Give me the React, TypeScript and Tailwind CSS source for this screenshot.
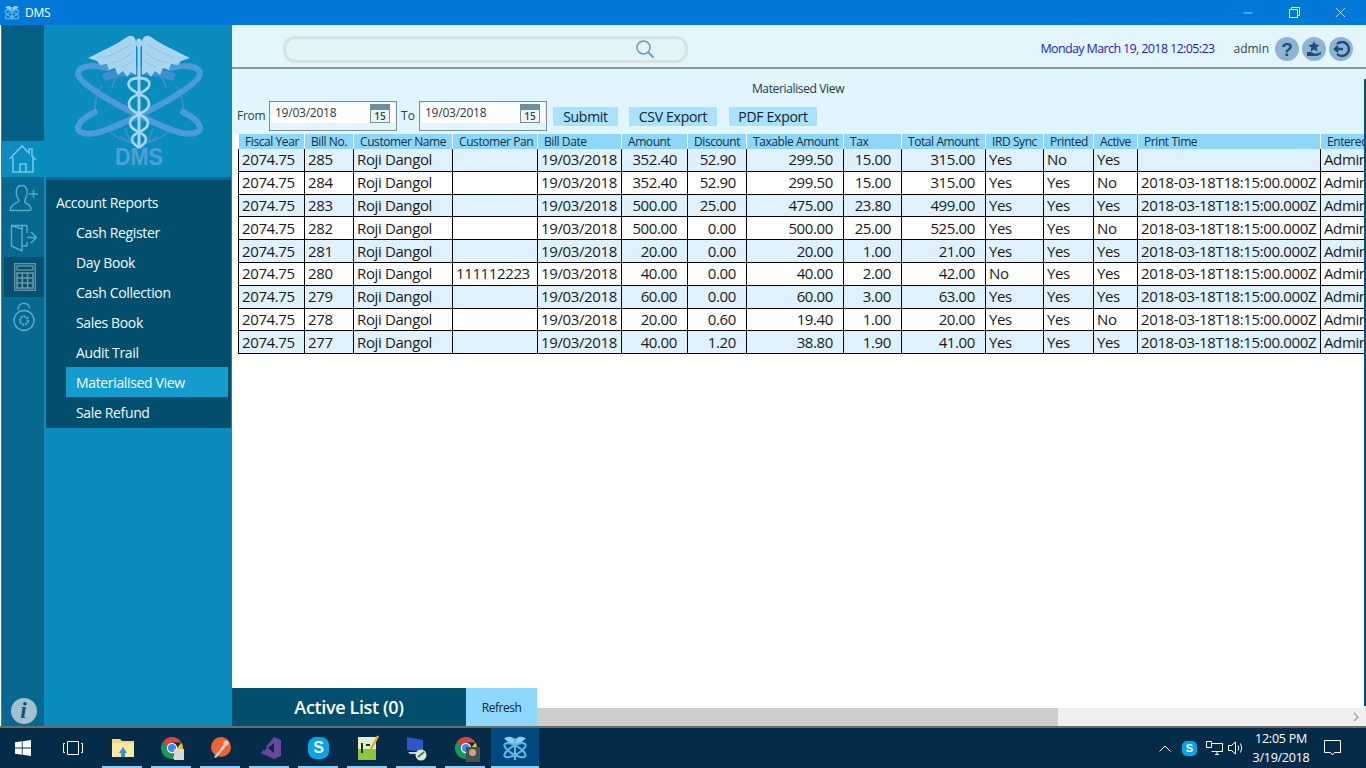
import { Minus, X } from "lucide-react";

const COLS = "66px 49px 99px 85px 84px 66px 59px 97px 58px 84px 58px 50px 44px 183px 60px";

const HEADERS = [
    "Fiscal Year", "Bill No.", "Customer Name", "Customer Pan", "Bill Date", "Amount", "Discount",
    "Taxable Amount", "Tax", "Total Amount", "IRD Sync", "Printed", "Active", "Print Time", "Entered By",
];

const TIME = "2018-03-18T18:15:00.000Z";

const ROWS = [
    ["285", "", "352.40", "52.90", "299.50", "15.00", "315.00", "Yes", "No", "Yes", ""],
    ["284", "", "352.40", "52.90", "299.50", "15.00", "315.00", "Yes", "Yes", "No", TIME],
    ["283", "", "500.00", "25.00", "475.00", "23.80", "499.00", "Yes", "Yes", "Yes", TIME],
    ["282", "", "500.00", "0.00", "500.00", "25.00", "525.00", "Yes", "Yes", "No", TIME],
    ["281", "", "20.00", "0.00", "20.00", "1.00", "21.00", "Yes", "Yes", "Yes", TIME],
    ["280", "111112223", "40.00", "0.00", "40.00", "2.00", "42.00", "No", "Yes", "Yes", TIME],
    ["279", "", "60.00", "0.00", "60.00", "3.00", "63.00", "Yes", "Yes", "Yes", TIME],
    ["278", "", "20.00", "0.60", "19.40", "1.00", "20.00", "Yes", "Yes", "No", TIME],
    ["277", "", "40.00", "1.20", "38.80", "1.90", "41.00", "Yes", "Yes", "Yes", TIME],
];

const MENU = ["Cash Register", "Day Book", "Cash Collection", "Sales Book", "Audit Trail", "Materialised View", "Sale Refund"];

function Wing() {
    return (
        <g>
            <path
                d="M66 45 L61 42 L57 47 L53 41 L48 45 L45 38 L39 40 L37 34 L30 35 L27 31 L18 28 C30 22 47 14 57 7 C62 4 66 7 66 13 Z"
                fill="#a6d5f0"
            />
            <path d="M61 14 C52 20 42 25 33 28 M63 22 C56 28 48 32 41 33 M64 30 C60 34 56 36 51 37" stroke="#8cc6e8" strokeWidth="1" fill="none" />
        </g>
    );
}

function Logo() {
    return (
        <svg width="136" height="140" viewBox="0 0 136 140" fill="none">
            {/* globo */}
            <path d="M32 44 Q69 30 106 44 L103 51 Q69 39 35 51 Z" fill="#3f8fca" />
            <g stroke="#3f8fca" strokeWidth="1.6">
                <path d="M32 56 Q24 68 25 82 M106 56 Q114 68 113 82" />
                <path d="M49 44 Q44 50 42 58 M89 44 Q94 50 96 58" />
                <path d="M38 100 Q69 128 100 100 M50 106 Q69 122 88 106" />
                <path d="M55 98 L60 112 M83 98 L78 112" />
            </g>
            {/* faixas cruzadas */}
            <g stroke="#4a9bd8" strokeWidth="6" strokeLinecap="round">
                <path d="M38 38 C22 34 8 36 8 44 C9 52 34 68 58 80 C78 90 98 100 112 103 C124 105 131 102 130 97 C129 92 121 86 113 82" />
                <path d="M100 38 C116 34 130 36 130 44 C129 52 104 68 80 80 C60 90 40 100 26 103 C14 105 7 102 8 97 C9 92 17 86 25 82" />
            </g>
            {/* asas */}
            <Wing />
            <g transform="translate(138 0) scale(-1 1)"><Wing /></g>
            {/* bastão e serpentes */}
            <path d="M69 12 V118" stroke="#a6d5f0" strokeWidth="3" />
            <ellipse cx="69" cy="13" rx="3" ry="4.5" fill="#a6d5f0" />
            <g stroke="#a6d5f0" strokeWidth="2.6">
                <path d="M78 50 C70 46 56 48 59 56 C62 64 79 64 79 74 C79 84 60 84 60 93 C60 102 76 102 76 109 C76 114 71 116 69 118" />
                <path d="M60 50 C68 46 82 48 79 56 C76 64 59 64 59 74 C59 84 78 84 78 93 C78 102 62 102 62 109 C62 114 67 116 69 118" />
            </g>
            <text x="45" y="135" textLength="48" lengthAdjust="spacingAndGlyphs" fill="#4f9fd8" fontFamily="Liberation Sans" fontWeight="700" fontSize="24">DMS</text>
        </svg>
    );
}

function HomeIcon() {
    return (
        <svg width="30" height="30" viewBox="0 0 30 30" fill="none" stroke="#6fc6e4" strokeWidth="1.6">
            <path d="M1.5 15 L14 2 L21 9 V5 H24 V12 L28 16 M5 13 V28 H25 V12 M12 28 V20 H18 V28" />
        </svg>
    );
}

function RailIcon({ name }: { name: "user" | "door" | "calc" | "lock" }) {
    if (name === "user") {
        return (
            <svg width="30" height="28" viewBox="0 0 30 28" fill="none" stroke="#5fa9c8" strokeWidth="1.4">
                <path d="M13 1.5 C8 1.5 6.5 6 7.5 11 C8 13.5 10 15 10 17 C9 19 2 20 1.5 25 V26.5 H21 C23 26 22 21 16 18.5 C15 17 17 14 18 11 C19 6 17 1.5 13 1.5 Z M20 10 H29 M24.5 6 V14" />
            </svg>
        );
    }
    if (name === "door") {
        return (
            <svg width="28" height="28" viewBox="0 0 28 28" fill="none" stroke="#5fa9c8" strokeWidth="1.4">
                <path d="M12 5 V1.5 H1.5 V22 L12 27 V5 L1.5 1.5 M12 22 H17 V18 M17 9 V1.5 H12 M17 13.5 H25 M21 8 L26.5 13.5 L21 19" />
            </svg>
        );
    }
    if (name === "calc") {
        return (
            <svg width="22" height="28" viewBox="0 0 22 28" fill="none" stroke="#6f97a8" strokeWidth="1.3">
                <rect x="0.7" y="0.7" width="20.6" height="26.6" />
                <rect x="3" y="3" width="16" height="4" />
                <path d="M3 10 H19 V25 H3 Z M8.3 10 V25 M13.6 10 V25 M3 15 H19 M3 20 H19" strokeWidth="1.6" />
            </svg>
        );
    }
    return (
        <svg width="22" height="30" viewBox="0 0 22 30" fill="none" stroke="#5fa9c8" strokeWidth="1.4">
            <path d="M5 8 C5 -0.5 16 -0.5 16.5 6" />
            <circle cx="11" cy="18.5" r="10" />
            <circle cx="11" cy="18.5" r="4" strokeDasharray="2 1" strokeWidth="2.4" />
        </svg>
    );
}

function CalendarIcon() {
    return (
        <div className="w-[20px] h-[19px] border border-[#7d8b94] bg-[#eef3f6] flex flex-col shrink-0">
            <div className="h-[5px] bg-[#6e8ea4]" />
            <div className="flex-1 flex items-center justify-center text-[10px] leading-none text-[#2c4a5c] font-semibold">15</div>
        </div>
    );
}

function DateBox() {
    return (
        <div className="w-[128px] h-[30px] border border-[#7f8c94] p-px">
            <div className="h-[20px] bg-white flex items-center justify-between pl-[4px] pr-[5px]">
                <span className="text-[12px] text-[#2a3a44] tracking-[-0.02em]">19/03/2018</span>
                <CalendarIcon />
            </div>
        </div>
    );
}

function ActionBtn({ label, width }: { label: string; width: string }) {
    return (
        <div className={`${width} h-[19px] bg-[#a9e2fc] flex items-center justify-center text-[14px] leading-none text-[#10242e] tracking-[-0.02em] mt-[6px] pt-[1px]`}>
            {label}
        </div>
    );
}

function Round({ children }: { children: React.ReactNode }) {
    return (
        <div className="w-[24px] h-[24px] rounded-full bg-[#8db4d2] flex items-center justify-center">
            {children}
        </div>
    );
}

function Row({ row, idx }: { row: string[]; idx: number }) {
    const [bill, pan, amount, discount, taxable, tax, total, ird, printed, active, time] = row;
    const cell = "border-r border-black px-[3px] flex items-center overflow-hidden whitespace-nowrap";
    const right = `${cell} justify-end pr-[10px]`;
    return (
        <div
            className={`grid h-[22.8px] border-b border-black text-[15px] leading-none text-[#1a1a1a] tracking-[-0.025em] ${idx % 2 === 0 ? "bg-[#e0f1fe]" : "bg-white"}`}
            style={{ gridTemplateColumns: COLS }}
        >
            <div className={cell}>2074.75</div>
            <div className={cell}>{bill}</div>
            <div className={cell}>Roji Dangol</div>
            <div className={cell}>{pan}</div>
            <div className={cell}>19/03/2018</div>
            <div className={right}>{amount}</div>
            <div className={right}>{discount}</div>
            <div className={right}>{taxable}</div>
            <div className={right}>{tax}</div>
            <div className={right}>{total}</div>
            <div className={cell}>{ird}</div>
            <div className={cell}>{printed}</div>
            <div className={cell}>{active}</div>
            <div className={cell}>{time}</div>
            <div className="px-[3px] flex items-center whitespace-nowrap">Admin</div>
        </div>
    );
}

function TaskIcon({ children, active, line = true }: { children: React.ReactNode; active?: boolean; line?: boolean }) {
    return (
        <div className={`relative h-[40px] flex items-center justify-center ${active ? "w-[48px] bg-[#004a80] ml-[1px]" : "w-[49px]"}`}>
            {children}
            {line && <div className={`absolute bottom-0 h-[2px] bg-[#8ccbf0] ${active ? "inset-x-0" : "left-[4px] right-[5px]"}`} />}
        </div>
    );
}

function ChromeIcon() {
    return (
        <svg width="22" height="22" viewBox="0 0 22 22">
            <path d="M11 0 A11 11 0 0 1 20.5 5.5 L11 5.5 Z M11 0 A11 11 0 0 0 2 4.7 L6 11 L11 5.5 Z" fill="#dc4437" />
            <path d="M20.5 5.5 A11 11 0 0 1 11 22 L16 11 Z" fill="#f4c20d" />
            <path d="M2 4.7 A11 11 0 0 0 11 22 L16 13 L6 11 Z" fill="#0f9d58" />
            <circle cx="11" cy="11" r="5.2" fill="#fff" />
            <circle cx="11" cy="11" r="4" fill="#4285f4" />
        </svg>
    );
}

function DmsGlyph({ size }: { size: number }) {
    return (
        <svg width={size} height={size} viewBox="0 0 24 24" fill="none">
            <path d="M11 9 C7 8 4 5 2 3 C6 1 10 1 11 4 Z M13 9 C17 8 20 5 22 3 C18 1 14 1 13 4 Z" fill="#8fd0ee" />
            <path d="M12 3 V23" stroke="#8fd0ee" strokeWidth="1.5" />
            <ellipse cx="12" cy="14" rx="11" ry="4" transform="rotate(30 12 14)" stroke="#5fb4e2" strokeWidth="2" />
            <ellipse cx="12" cy="14" rx="11" ry="4" transform="rotate(-30 12 14)" stroke="#5fb4e2" strokeWidth="2" />
        </svg>
    );
}

export default function App() {
    return (
        <div className="relative w-[1366px] h-[768px] overflow-hidden flex flex-col bg-white text-[#10242e] font-['Open_Sans',sans-serif]">

            {/* Barra de título */}
            <div className="h-[25px] bg-[#0078d7] flex items-center shrink-0 text-white">
                <div className="ml-[4px] mr-[5px]"><DmsGlyph size={16} /></div>
                <span className="text-[12px] tracking-[-0.02em]">DMS</span>
                <div className="ml-auto flex items-center mr-[2px]">
                    <div className="w-[46px] flex justify-center"><Minus size={14} strokeWidth={1} /></div>
                    <div className="w-[46px] flex justify-center">
                        <svg width="11" height="11" viewBox="0 0 11 11" fill="none" stroke="white">
                            <path d="M0.5 2.5 H8.5 V10.5 H0.5 Z M2.5 2.5 V0.5 H10.5 V8.5 H8.5" />
                        </svg>
                    </div>
                    <div className="w-[46px] mr-[1px] flex justify-center"><X size={17} strokeWidth={1} /></div>
                </div>
            </div>

            <div className="flex-1 flex min-h-0">

                {/* Trilho de ícones */}
                <div className="w-[44px] ml-[1px] -mr-[1px] shrink-0 flex flex-col bg-[#07698f] border-l border-[#2a7fb0]">
                    <div className="h-[116px] bg-[#035f83]" />
                    <div className="h-[36px] bg-[#0a8cbd] flex items-center justify-center pr-[2px]"><HomeIcon /></div>
                    <div className="h-[40px] flex items-center justify-center mt-[1px]"><RailIcon name="user" /></div>
                    <div className="h-[39px] flex items-center justify-center"><RailIcon name="door" /></div>
                    <div className="h-[40px] ml-[2px] bg-[#045070] flex items-center justify-center"><RailIcon name="calc" /></div>
                    <div className="h-[40px] flex items-center justify-center"><RailIcon name="lock" /></div>
                    <div className="mt-auto mb-[2px] flex justify-center">
                        <div className="w-[26px] h-[26px] rounded-full bg-[#a3bfd0] flex items-center justify-center font-['Liberation_Serif',serif] italic font-bold text-[23px] text-[#0e5675]">i</div>
                    </div>
                </div>

                {/* Menu lateral */}
                <div className="w-[188px] shrink-0 flex flex-col bg-[#0a8cbd]">
                    <div className="h-[152px] pl-[26px] pt-[5px]"><Logo /></div>
                    <div className="h-[251px] ml-[2px] mr-px bg-[#024f6d] border-t-[3px] border-[#05688e] text-[#f2fbff] text-[14px] tracking-[-0.025em] font-medium">
                        <div className="h-[37px] pl-[10px] flex items-center pt-[8px]">Account Reports</div>
                        {MENU.map(m => (
                            <div
                                key={m}
                                className={`h-[30px] ml-[20px] mr-[3px] pl-[10px] flex items-center ${m === "Materialised View" ? "bg-[#159ccf]" : ""}`}
                            >
                                {m}
                            </div>
                        ))}
                    </div>
                </div>

                {/* Conteúdo */}
                <div className="flex-1 min-w-0 flex flex-col">
                    <div className="h-[44px] shrink-0 bg-[#e4f6fd] border-b-2 border-[#8e9a9e] flex items-center pt-[6px]">
                        <div className="ml-[51px] w-[405px] h-[27px] rounded-[12px] border-[3px] border-[#d6e3e6] bg-[#e3f3f7] flex items-center justify-end pr-[30px]">
                            <svg width="20" height="20" viewBox="0 0 20 20" fill="none">
                                <circle cx="8.5" cy="8.5" r="6.5" stroke="#5f9fd0" strokeWidth="1.5" />
                                <path d="M13.5 13.5 L18.5 18.5" stroke="#5f9fd0" strokeWidth="2" />
                            </svg>
                        </div>
                        <span className="ml-auto text-[12.5px] text-[#1c1cd0] tracking-[-0.05em] font-medium">Monday March 19, 2018 12:05:23</span>
                        <span className="ml-[19px] text-[12px] text-[#1f4a60]">admin</span>
                        <div className="ml-[6px] mr-[13px] flex items-center gap-[3px]">
                            <Round><span className="font-['Liberation_Sans',sans-serif] font-bold text-[19px] leading-none text-[#1c4f78]">?</span></Round>
                            <Round>
                                <svg width="16" height="16" viewBox="0 0 16 16" fill="#1c4f78">
                                    <path d="M8 0 L9.7 3.6 L13.5 4 L10.7 6.6 L11.4 10.4 L8 8.5 L4.6 10.4 L5.3 6.6 L2.5 4 L6.3 3.6 Z M1 11 H5 L8 12.5 H11 L15 11 V13 L11 15 H1 Z" />
                                </svg>
                            </Round>
                            <Round>
                                <svg width="18" height="18" viewBox="0 0 18 18" fill="none" stroke="#1c4f78" strokeWidth="2.4">
                                    <path d="M5 4 A7 7 0 1 1 5 14 M2 9 H11 M6 6 L3 9 L6 12" />
                                </svg>
                            </Round>
                        </div>
                    </div>

                    <div className="h-[65px] shrink-0 bg-[#e1f5fe] flex flex-col">
                        <div className="h-[32px] text-center text-[12px] tracking-[-0.03em] text-[#1f3a4a] pt-[11px] leading-[18px] pr-[2px]">Materialised View</div>
                        <div className="h-[33px] flex items-start ml-[5px]">
                            <span className="w-[32px] text-[12px] text-[#2a4452] mt-[6px] tracking-[-0.02em]">From</span>
                            <DateBox />
                            <span className="w-[22px] text-center text-[12px] text-[#2a4452] mt-[6px]">To</span>
                            <DateBox />
                            <div className="ml-[6px] flex gap-[11px]">
                                <ActionBtn label="Submit" width="w-[65px]" />
                                <ActionBtn label="CSV Export" width="w-[88px]" />
                                <ActionBtn label="PDF Export" width="w-[88px] ml-px" />
                            </div>
                        </div>
                    </div>

                    <div className="ml-[6px] w-[1126px] overflow-hidden">
                        <div
                            className="grid ml-px w-[1142px] h-[15px] text-[12px] leading-none text-[#15303e] tracking-[-0.035em]"
                            style={{ gridTemplateColumns: COLS }}
                        >
                            {HEADERS.map(h => (
                                <div key={h} className="bg-[#8fd6fb] mr-px pl-[6px] flex items-center overflow-hidden whitespace-nowrap">{h}</div>
                            ))}
                        </div>
                        <div className="w-[1143px] border-l border-black">
                            {ROWS.map((r, i) => <Row key={r[0]} row={r} idx={i} />)}
                        </div>
                    </div>

                    <div className="flex-1" />

                    <div className="h-[38px] shrink-0 flex items-stretch">
                        <div className="w-[234px] bg-[#024f6d] flex items-center justify-center text-[18px] font-semibold text-white tracking-[-0.02em]">Active List (0)</div>
                        <div className="w-[71px] bg-[#8fd8fd] flex items-center justify-center pt-px text-[12px] tracking-[-0.04em] text-[#10242e]">Refresh</div>
                        <div className="flex-1 self-end h-[18px] bg-[#f0f0f0] flex items-center">
                            <div className="w-[521px] h-full bg-[#cdcdcd]" />
                            <svg className="ml-auto mr-[7px]" width="6" height="10" viewBox="0 0 6 10" fill="none" stroke="#a0a0a0" strokeWidth="1.3">
                                <path d="M1 1 L5 5 L1 9" />
                            </svg>
                        </div>
                    </div>
                </div>
            </div>

            {/* Barra de tarefas */}
            <div className="h-[42px] shrink-0 bg-[#042b48] border-t-[2px] border-[#6e6a68] flex items-center text-white">
                <div className="w-[48px] flex justify-center pr-[2px]">
                    <svg width="16" height="16" viewBox="0 0 16 16" fill="white">
                        <path d="M0 2.3 L6.8 1.3 V7.5 H0 Z M7.6 1.2 L16 0 V7.5 H7.6 Z M0 8.4 H6.8 V14.7 L0 13.7 Z M7.6 8.4 H16 V16 L7.6 14.8 Z" />
                    </svg>
                </div>
                <div className="w-[49px] flex justify-center">
                    <svg width="20" height="14" viewBox="0 0 20 14" fill="none" stroke="white" strokeWidth="1">
                        <path d="M4.5 0.5 H15.5 V13.5 H4.5 Z M2 2.5 H0.5 V11.5 H2 M18 2.5 H19.5 V11.5 H18" />
                    </svg>
                </div>
                <div className="flex items-center ml-[1px]">
                    <TaskIcon>
                        <svg width="22" height="20" viewBox="0 0 22 20">
                            <path d="M0 1 H8 L10 3 H22 V19 H0 Z" fill="#f6d77c" />
                            <path d="M0 5 H22 V19 H0 Z" fill="#ffe9a1" />
                            <path d="M7 15 L11 9 L15 15 H13 V19 H9 V15 Z" fill="#2f93d6" />
                        </svg>
                    </TaskIcon>
                    <TaskIcon>
                        <div className="relative">
                            <ChromeIcon />
                            <div className="absolute -right-[1px] -bottom-[1px] w-[10px] h-[11px] bg-[#d8d8d8]" />
                        </div>
                    </TaskIcon>
                    <TaskIcon>
                        <svg width="22" height="24" viewBox="0 0 22 24">
                            <circle cx="11" cy="11" r="10" fill="#ea6331" />
                            <path d="M4 21 L15 7 L17 9 L6 22 Z" fill="#d9d2c8" />
                            <circle cx="16" cy="7" r="2.6" fill="#f3c9b3" />
                        </svg>
                    </TaskIcon>
                    <TaskIcon>
                        <svg width="24" height="24" viewBox="0 0 24 24">
                            <path d="M16 1 L23 4 V20 L16 23 L3 17 Z" fill="#68489e" />
                            <path d="M16 7 L10 12 L16 17 Z M6 9 L9 12 L6 15 Z" fill="#042b48" />
                        </svg>
                    </TaskIcon>
                    <TaskIcon>
                        <div className="w-[21px] h-[22px] rounded-[8px] bg-[#05a6e8] flex items-center justify-center font-['Liberation_Sans',sans-serif] font-bold text-[16px] text-white">S</div>
                    </TaskIcon>
                    <TaskIcon>
                        <svg width="22" height="26" viewBox="0 0 22 26">
                            <rect x="1" y="2" width="18" height="23" fill="#e4efc8" />
                            <rect x="1" y="14" width="18" height="11" fill="#8fc43f" />
                            <path d="M5 8 V18 M9 10 H13" stroke="#12361f" strokeWidth="2" />
                            <path d="M14 14 L21 1" stroke="#e3a92f" strokeWidth="2.5" />
                        </svg>
                    </TaskIcon>
                    <TaskIcon>
                        <svg width="24" height="26" viewBox="0 0 24 26">
                            <path d="M2 2 L18 5 V17 L2 15 Z" fill="#2f57c8" />
                            <path d="M3 17 H14 L17 19 H5 Z" fill="#c9ced6" />
                            <circle cx="16" cy="20" r="5.5" fill="#dfe6df" />
                            <path d="M13 22 L19 17" stroke="#3a8f3a" strokeWidth="2" />
                        </svg>
                    </TaskIcon>
                    <TaskIcon>
                        <div className="relative">
                            <ChromeIcon />
                            <div className="absolute -right-[3px] -bottom-[3px] w-[14px] h-[15px] bg-[#46504f]">
                                <div className="mx-auto mt-[2px] w-[7px] h-[7px] rounded-full bg-[#c9a388]" />
                            </div>
                        </div>
                    </TaskIcon>
                    <TaskIcon active><DmsGlyph size={26} /></TaskIcon>
                </div>

                <div className="ml-auto flex items-center">
                    <svg width="12" height="7" viewBox="0 0 12 7" fill="none" stroke="white">
                        <path d="M0.5 6.5 L6 1 L11.5 6.5" />
                    </svg>
                    <div className="ml-[11px] w-[15px] h-[15px] rounded-[5px] bg-[#05a6e8] flex items-center justify-center font-['Liberation_Sans',sans-serif] font-bold text-[11px]">S</div>
                    <svg className="ml-[9px]" width="17" height="14" viewBox="0 0 17 14" fill="none" stroke="white">
                        <path d="M5.5 2.5 H16.5 V10.5 H5.5 M0.5 0.5 H5.5 V6.5 H0.5 Z M9 13.5 H13 M11 10.5 V13.5" />
                    </svg>
                    <svg className="ml-[5px]" width="16" height="14" viewBox="0 0 16 14" fill="none" stroke="white">
                        <path d="M0.5 4.5 H3.5 L7.5 1 V13 L3.5 9.5 H0.5 Z M10 4.5 Q11.5 7 10 9.5 M12.5 2.5 Q15 7 12.5 11.5" />
                    </svg>
                    <div className="w-[74px] text-center text-[12.5px] leading-[19px] tracking-[-0.02em]">
                        <div>12:05 PM</div>
                        <div>3/19/2018</div>
                    </div>
                    <svg className="ml-[6px] mr-[25px]" width="17" height="16" viewBox="0 0 17 16" fill="none" stroke="white">
                        <path d="M0.5 0.5 H16.5 V12.5 H10.5 L8.5 15 L6.5 12.5 H0.5 Z" />
                    </svg>
                </div>
            </div>

            {/* Fresta da janela à direita */}
            <div className="absolute right-0 top-[79px] bottom-[62px] w-[2px] bg-[#0a4f80]" />
        </div>
    );
}
